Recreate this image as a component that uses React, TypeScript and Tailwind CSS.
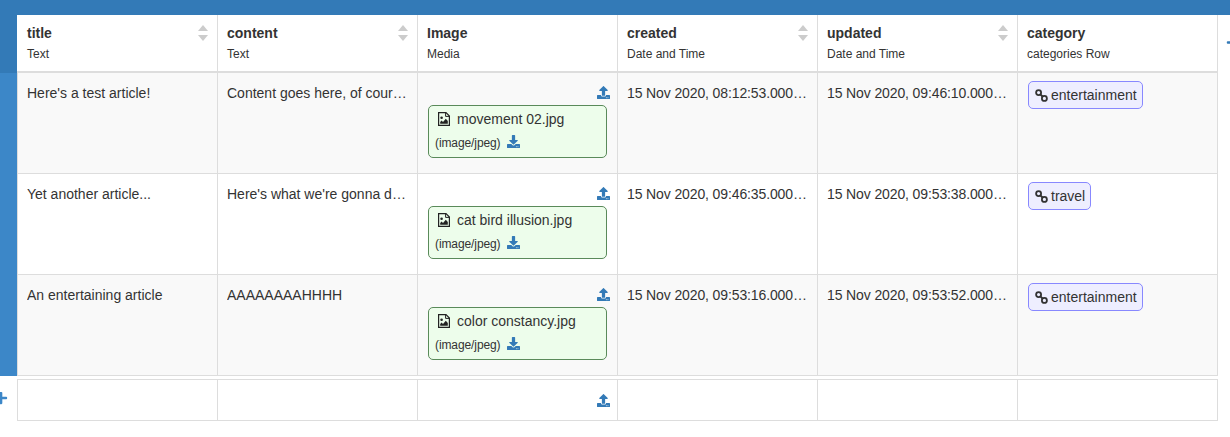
import { FaDownload, FaPlus, FaUpload } from "react-icons/fa"

const columns = [
  { name: "title", type: "Text", sort: true },
  { name: "content", type: "Text", sort: true },
  { name: "Image", type: "Media", sort: false },
  { name: "created", type: "Date and Time", sort: true },
  { name: "updated", type: "Date and Time", sort: true },
  { name: "category", type: "categories Row", sort: false },
]

const rows = [
  {
    title: "Here's a test article!",
    content: "Content goes here, of course, and more of it",
    file: "movement 02.jpg",
    created: "15 Nov 2020, 08:12:53.000000",
    updated: "15 Nov 2020, 09:46:10.000000",
    category: "entertainment",
  },
  {
    title: "Yet another article...",
    content: "Here's what we're gonna do about it today",
    file: "cat bird illusion.jpg",
    created: "15 Nov 2020, 09:46:35.000000",
    updated: "15 Nov 2020, 09:53:38.000000",
    category: "travel",
  },
  {
    title: "An entertaining article",
    content: "AAAAAAAAHHHH",
    file: "color constancy.jpg",
    created: "15 Nov 2020, 09:53:16.000000",
    updated: "15 Nov 2020, 09:53:52.000000",
    category: "entertainment",
  },
]

function SortIcon() {
  return (
    <svg width="10" height="16" viewBox="0 0 10 16" className="mt-[2px] shrink-0 text-[#cccccc]" fill="currentColor">
      <path d="M5 0 L10 6 L0 6 Z" />
      <path d="M0 10 L10 10 L5 16 Z" />
    </svg>
  )
}

function LinkIcon() {
  return (
    <svg width="13" height="13" viewBox="0 0 13 13" fill="none" stroke="#333333" strokeWidth="1.8" className="shrink-0">
      <circle cx="3.6" cy="3.6" r="2.5" />
      <circle cx="9.4" cy="9.4" r="2.5" />
      <path d="M5 5 L8 8" />
    </svg>
  )
}

function FileImageIcon() {
  return (
    <svg width="12" height="14" viewBox="0 0 12 14" className="ml-[1px] mr-[7px] shrink-0 text-[#222222]">
      <path d="M.6.6 H8 L11.4 4 V13.4 H.6 Z" fill="none" stroke="currentColor" strokeWidth="1.2" />
      <path d="M7.6.6 V4.4 H11.4" fill="none" stroke="currentColor" strokeWidth="1" />
      <circle cx="3.6" cy="5.8" r="1.3" fill="currentColor" />
      <path d="M2.2 11.8 V10 L3.6 8.6 L5 10 L7.8 6.8 L9.8 9 V11.8 Z" fill="currentColor" />
    </svg>
  )
}

function Cell({ children, className = "" }: { children?: React.ReactNode; className?: string }) {
  return <div className={`min-w-0 border-r border-[#dddddd] ${className}`}>{children}</div>
}

function TextCell({ text, className = "" }: { text: string; className?: string }) {
  return (
    <Cell className="pl-[9px] pr-[8px] pt-[10px]">
      <div className={`truncate leading-5 ${className}`}>{text}</div>
    </Cell>
  )
}

export default function App() {
  return (
    <div className="h-[437px] w-[1230px] overflow-hidden bg-white text-sm text-[#333333] font-['Liberation_Sans',Arial,sans-serif]">
      <div className="h-[15px] bg-[#337ab7]" />
      <div className="flex">
        <div className="w-[17px] shrink-0">
          <div className="h-[58px] bg-[#337ab7]" />
          <div className="h-[303px] bg-[#3c87c8]" />
          <div className="mt-[15px] flex h-[14px] w-[17px] items-center overflow-hidden">
            <FaPlus className="ml-[-6px] shrink-0 text-[14px] text-[#3c87c8]" />
          </div>
        </div>

        <div className="w-[1201px] shrink-0">
          <div className="grid h-[58px] grid-cols-[repeat(6,200px)] border-b-2 border-[#dddddd] pl-px">
            {columns.map((col) => (
              <Cell key={col.name} className="flex justify-between px-[9px] pt-[8px]">
                <div>
                  <div className="font-bold leading-5">{col.name}</div>
                  <div className="mt-[3px] text-xs leading-[17px]">{col.type}</div>
                </div>
                {col.sort && <SortIcon />}
              </Cell>
            ))}
          </div>

          {rows.map((row, i) => (
            <div
              key={row.file}
              className={`grid h-[101px] grid-cols-[repeat(6,200px)] border-b border-l border-[#dddddd] ${
                i % 2 === 0 ? "bg-[#f9f9f9]" : "bg-white"
              }`}
            >
              <TextCell text={row.title} />
              <TextCell text={row.content} />
              <Cell className="px-[10px] pt-[13px]">
                <div className="flex justify-end">
                  <FaUpload className="mr-[-3px] text-[13px] text-[#337ab7]" />
                </div>
                <div className="mt-[6px] h-[53px] w-[179px] rounded-[5px] border border-[#5a8a5a] bg-[#edfdeb] px-[6px]">
                  <div className="flex h-[26px] items-center pl-[2px]">
                    <FileImageIcon />
                    <span>{row.file}</span>
                  </div>
                  <div className="mt-[3px] flex items-center text-xs">
                    <span className="tracking-[-0.1px]">(image/jpeg)</span>
                    <FaDownload className="ml-[6px] mt-[-3px] text-[13px] text-[#337ab7]" />
                  </div>
                </div>
              </Cell>
              <TextCell text={row.created} className="tracking-[-0.12px]" />
              <TextCell text={row.updated} className="tracking-[-0.12px]" />
              <Cell className="pl-[10px] pt-[8px]">
                <div className="inline-flex h-[28px] items-center gap-[3px] rounded-[5px] border border-[#8888ff] bg-[#eeeeff] pl-[6px] pr-[5px]">
                  <LinkIcon />
                  <span>{row.category}</span>
                </div>
              </Cell>
            </div>
          ))}

          <div className="mt-[3px] grid h-[42px] grid-cols-[repeat(6,200px)] border border-r-0 border-[#dddddd]">
            <Cell />
            <Cell />
            <Cell className="flex items-center justify-end pr-[7px]">
              <FaUpload className="text-[13px] text-[#337ab7]" />
            </Cell>
            <Cell />
            <Cell />
            <Cell />
          </div>
        </div>

        <div className="flex-1 overflow-hidden">
          <div className="ml-[8px] mt-[21px] text-[13px] text-[#337ab7]">
            <FaPlus />
          </div>
        </div>
      </div>
    </div>
  )
}
